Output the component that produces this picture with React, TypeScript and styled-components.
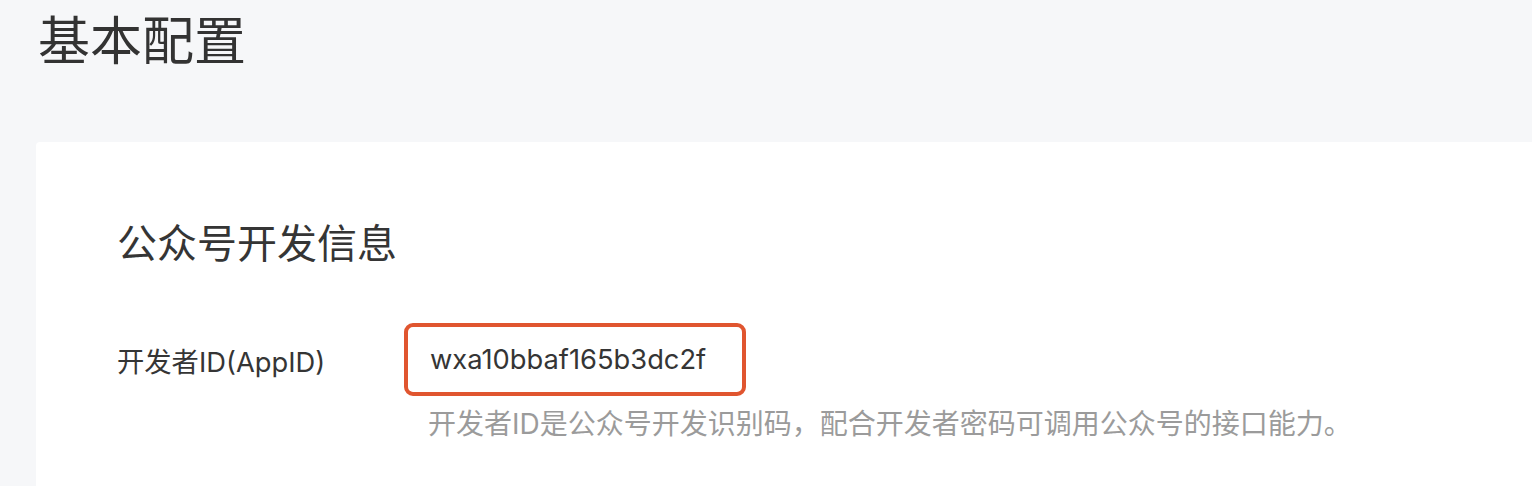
import React from "react";
import styled, { createGlobalStyle } from "styled-components";

const Global = createGlobalStyle`
  html, body { margin: 0; padding: 0; background: #f6f7f9; }
  body { font-family: "Inter", "Noto Sans CJK SC", sans-serif; overflow: hidden; }
`;

const Page = styled.div`
  width: 1532px;
  height: 486px;
  display: flex;
  flex-direction: column;
  background: #f6f7f9;
  overflow: hidden;
`;

const Title = styled.h1`
  margin: 0;
  padding: 6px 0 0 38px;
  height: 142px;
  box-sizing: border-box;
  font-size: 52px;
  line-height: 64px;
  font-weight: 400;
  color: #333333;
  font-family: "Noto Sans CJK SC", sans-serif;
`;

const Card = styled.section`
  margin-left: 36px;
  flex: 1;
  background: #ffffff;
  border-top-left-radius: 4px;
  padding: 71px 0 0 81px;
`;

const Heading = styled.h2`
  margin: 0 0 54px;
  font-size: 40px;
  line-height: 56px;
  font-weight: 400;
  color: #353535;
  font-family: "Noto Sans CJK SC", sans-serif;
`;

const Row = styled.div`
  display: grid;
  grid-template-columns: 287px auto;
  row-gap: 6px;
  align-items: center;
`;

const Label = styled.div`
  font-size: 27.3px;
  color: #353535;
`;

const Field = styled.div`
  width: 342px;
  height: 73px;
  box-sizing: border-box;
  border: 4px solid #e0552f;
  border-radius: 9px;
  padding-left: 22px;
  display: flex;
  align-items: center;
  font-size: 27.3px;
  color: #353535;
`;

const Hint = styled.div`
  grid-column: 2;
  padding-left: 24px;
  font-size: 28px;
  color: #9b9b9b;
  white-space: nowrap;
`;

export default function App() {
  return (
    <Page>
      <Global />
      <Title>基本配置</Title>
      <Card>
        <Heading>公众号开发信息</Heading>
        <Row>
          <Label>开发者ID(AppID)</Label>
          <Field>wxa10bbaf165b3dc2f</Field>
          <Hint>开发者ID是公众号开发识别码，配合开发者密码可调用公众号的接口能力。</Hint>
        </Row>
      </Card>
    </Page>
  );
}
